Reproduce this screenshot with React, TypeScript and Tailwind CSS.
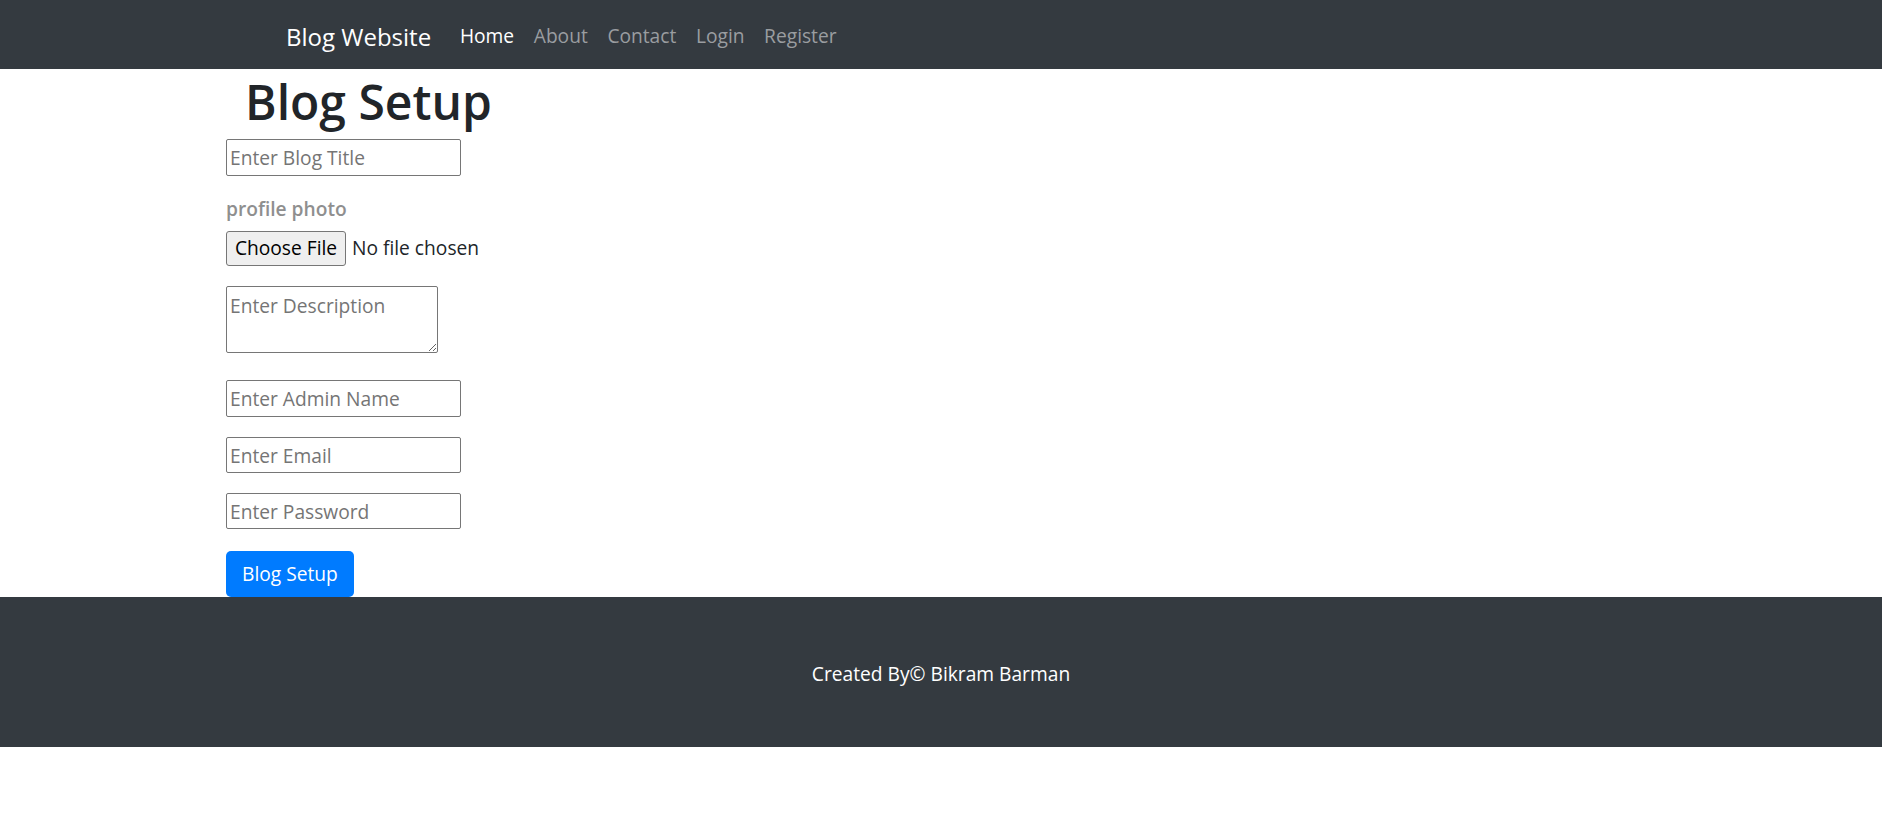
import React from 'react'

const font = { fontFamily: '"Open Sans", "Noto Sans", sans-serif' }

function NavBar() {
  const links = ['Home', 'About', 'Contact', 'Login', 'Register']
  return (
    <nav className="h-[69px] w-full bg-[#343a40] flex items-center pl-[286px] pt-[5px]">
      <a href="#" className="text-[24px] text-white leading-none">Blog Website</a>
      <ul className="flex items-center ml-[19px]">
        {links.map((l, i) => (
          <li key={l}>
            <a
              href="#"
              className={
                'px-[9.8px] text-[19.2px] leading-none ' +
                (i === 0 ? 'text-white' : 'text-[#9a9da0]')
              }
            >
              {l}
            </a>
          </li>
        ))}
      </ul>
    </nav>
  )
}

function Field({ placeholder, type = 'text', className = '' }: { placeholder: string; type?: string; className?: string }) {
  return (
    <input
      type={type}
      placeholder={placeholder}
      className={
        'w-[235px] border border-[#767676] rounded-[2px] px-[3px] text-[19.2px] text-black placeholder:text-[#757575] outline-none ' +
        className
      }
    />
  )
}

function BlogSetupForm() {
  return (
    <form className="flex flex-col items-start pl-[226px]" onSubmit={(e) => e.preventDefault()}>
      <h1 className="h-[58px] mt-[4px] mb-[8px] ml-[19px] text-[48px] font-semibold leading-[58px] text-[#212529]">
        Blog Setup
      </h1>
      <Field placeholder="Enter Blog Title" className="h-[37px] mb-[19px]" />
      <label className="h-[28px] leading-[28px] mb-[7px] text-[19.2px] font-semibold text-[#8f8f8f]">
        profile photo
      </label>
      <label className="h-[35px] mb-[21px] flex items-center cursor-pointer pt-[2px]">
        <input type="file" className="hidden" />
        <span className="h-[35px] w-[120px] flex items-center justify-center bg-[#efefef] border border-[#767676] rounded-[3px] text-[19.2px] text-black">
          Choose File
        </span>
        <span className="ml-[6px] text-[19.2px] text-[#212529]">No file chosen</span>
      </label>
      <textarea
        placeholder="Enter Description"
        className="block w-[212px] h-[67px] mb-[27px] border border-[#767676] rounded-[2px] px-[3px] pt-[6px] text-[19.2px] leading-[26px] placeholder:text-[#757575] outline-none"
      />
      <Field placeholder="Enter Admin Name" className="h-[37px] mb-[20px]" />
      <Field placeholder="Enter Email" type="email" className="h-[36px] mb-[20px]" />
      <Field placeholder="Enter Password" type="password" className="h-[36px] mb-[22px]" />
      <button
        type="submit"
        className="h-[46px] px-[16px] bg-[#007bff] text-white text-[19.2px] rounded-[5px]"
      >
        Blog Setup
      </button>
    </form>
  )
}

export default function App() {
  return (
    <div className="min-h-[817px] bg-white" style={font}>
      <NavBar />
      <BlogSetupForm />
      <footer className="h-[150px] bg-[#343a40] flex items-center justify-center pt-[4px]">
        <p className="text-[19.2px] text-white">Created By© Bikram Barman</p>
      </footer>
    </div>
  )
}
